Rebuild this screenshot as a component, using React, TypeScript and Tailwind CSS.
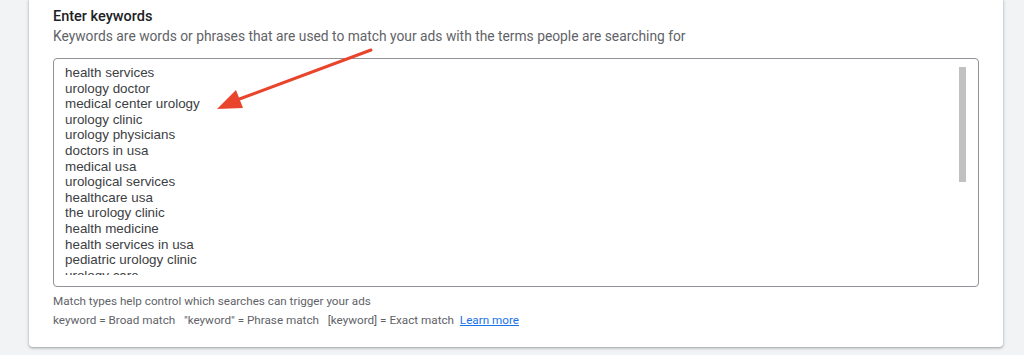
const keywords = [
  'health services',
  'urology doctor',
  'medical center urology',
  'urology clinic',
  'urology physicians',
  'doctors in usa',
  'medical usa',
  'urological services',
  'healthcare usa',
  'the urology clinic',
  'health medicine',
  'health services in usa',
  'pediatric urology clinic',
  'urology care',
  'urology specialists',
]

export default function App() {
  return (
    <div className="relative h-[355px] w-[1024px] overflow-hidden bg-[#f1f3f4] pl-[29px] pr-[21px] font-['Roboto',sans-serif]">
      <div className="flex h-[347px] flex-col rounded-b-[4px] bg-white px-[24px] pt-[7px] shadow-[0_1px_2px_rgba(60,64,67,0.3),0_1px_3px_1px_rgba(60,64,67,0.15)]">
        <h2 className="text-[14.5px] leading-[20px] font-medium text-[#202124]">Enter keywords</h2>
        <p className="text-[13.8px] leading-[19px] text-[#5f6368]">Keywords are words or phrases that are used to match your ads with the terms people are searching for</p>

        <div className="relative mt-[12px] h-[229px] rounded-[4px] border border-[#8f9296] pt-[6px] pl-[11px]">
          <div className="h-[210px] overflow-hidden font-['Liberation_Sans',Arial,sans-serif] text-[13.4px] leading-[15.6px] text-[#3c4043]">
            {keywords.map((k) => (
              <div key={k}>{k}</div>
            ))}
          </div>
          <div className="absolute right-[12px] top-[8px] h-[115px] w-[7px] bg-[#c1c1c1]" />
        </div>

        <div className="mt-[6px] text-[11.7px] leading-[17px] text-[#5f6368]">
          <p>Match types help control which searches can trigger your ads</p>
          <p className="mt-[2px]">
            keyword = Broad match&nbsp;&nbsp; "keyword" = Phrase match&nbsp;&nbsp; [keyword] = Exact match&nbsp;&nbsp;
            <a className="text-[#1a73e8] underline">Learn more</a>
          </p>
        </div>
      </div>

      <svg className="absolute left-0 top-0" width="1024" height="355" viewBox="0 0 1024 355">
        <line x1="371" y1="50" x2="234" y2="101" stroke="#e8452c" strokeWidth="3" strokeLinecap="round" />
        <polygon points="217,109 236,90 243,108" fill="#e8452c" />
      </svg>
    </div>
  )
}
